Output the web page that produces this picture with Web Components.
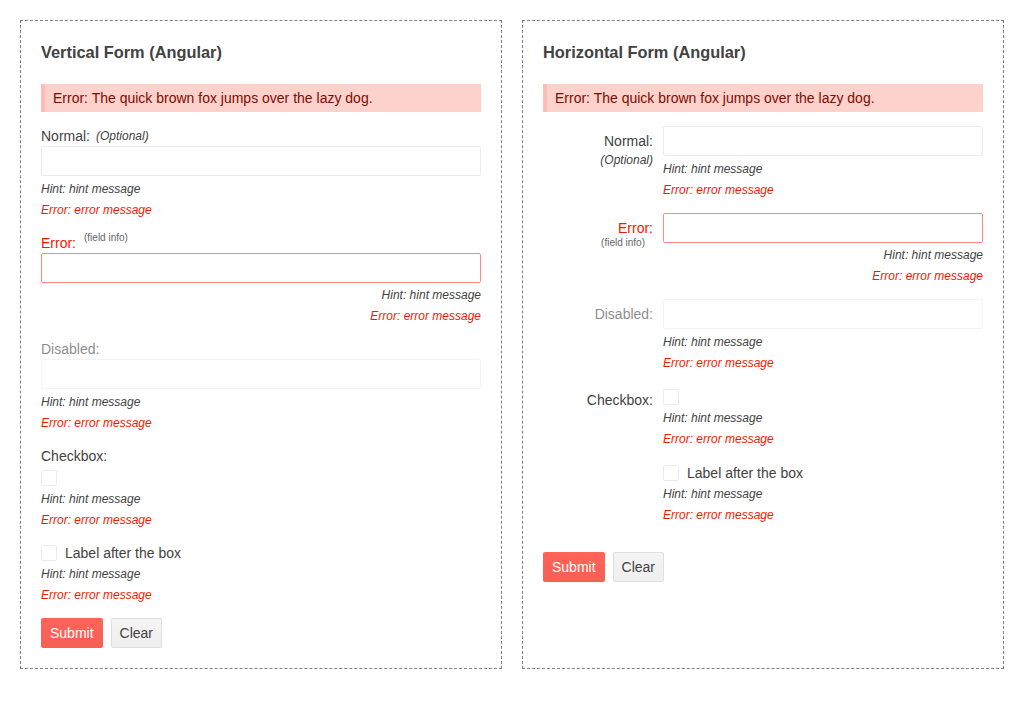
<!DOCTYPE html>
<html lang="en">
<head>
<meta charset="utf-8">
<meta name="viewport" content="width=device-width, initial-scale=1">
<title>Forms</title>
<style>
  body {
    margin: 0;
    padding: 20px;
    background: #fff;
    color: #424242;
    font: 14px/20px "Liberation Sans", Arial, sans-serif;
    --error: #f31700;
  }
</style>
</head>
<body>
<form-columns>
  <form-panel heading="Vertical Form (Angular)">
    <form-alert>Error: The quick brown fox jumps over the lazy dog.</form-alert>
    <form-field label="Normal:" optional="(Optional)"></form-field>
    <form-field label="Error:" info="(field info)" invalid align="end"></form-field>
    <form-field label="Disabled:" disabled></form-field>
    <form-field label="Checkbox:" kind="checkbox"></form-field>
    <form-field after="Label after the box" kind="checkbox"></form-field>
    <form-actions>
      <form-button primary>Submit</form-button>
      <form-button>Clear</form-button>
    </form-actions>
  </form-panel>
  <form-panel heading="Horizontal Form (Angular)">
    <form-alert>Error: The quick brown fox jumps over the lazy dog.</form-alert>
    <form-field horizontal label="Normal:" optional="(Optional)"></form-field>
    <form-field horizontal label="Error:" info="(field info)" invalid align="end"></form-field>
    <form-field horizontal label="Disabled:" disabled></form-field>
    <form-field horizontal label="Checkbox:" kind="checkbox"></form-field>
    <form-field horizontal after="Label after the box" kind="checkbox"></form-field>
    <form-actions spaced>
      <form-button primary>Submit</form-button>
      <form-button>Clear</form-button>
    </form-actions>
  </form-panel>
</form-columns>
<script>
  class BaseElement extends HTMLElement {
    connectedCallback() {
      if (this.shadowRoot) return;
      this.attachShadow({ mode: 'open' }).innerHTML = this.render();
    }
  }

  customElements.define('form-columns', class extends BaseElement {
    render() {
      return `<style>
        :host { display: grid; grid-template-columns: 1fr 1fr; gap: 20px; }
      </style><slot></slot>`;
    }
  });

  customElements.define('form-panel', class extends BaseElement {
    render() {
      return `<style>
        :host { display: block; border: 1px dashed #808080; padding: 20px; min-width: 0; }
        h3 { margin: 0 0 21px; line-height: 22px; }
        form { display: flex; flex-direction: column; gap: 14px; }
      </style>
      <h3>${this.getAttribute('heading')}</h3>
      <form novalidate onsubmit="return false"><slot></slot></form>`;
    }
  });

  customElements.define('form-alert', class extends BaseElement {
    render() {
      return `<style>
        :host { display: block; padding: 4px 8px; border-left: 4px solid #ffbcb7;
          background: #fdd1cc; color: #7f0c00; }
      </style><div role="alert"><slot></slot></div>`;
    }
  });

  customElements.define('form-field', class extends BaseElement {
    render() {
      const attr = name => this.getAttribute(name) || '';
      const state = (this.hasAttribute('disabled') ? ' disabled' : '')
        + (this.hasAttribute('invalid') ? ' aria-invalid="true"' : '');
      const box = attr('kind') === 'checkbox';
      const optional = attr('optional') ? `<span class="optional">${attr('optional')}</span>` : '';
      const info = attr('info') ? `<span class="info">${attr('info')}</span>` : '';
      const label = attr('label')
        ? `<label class="label" for="control"><span>${attr('label')}</span>${optional}${info}</label>` : '';
      const after = attr('after') ? `<label for="control">${attr('after')}</label>` : '';
      return `<style>
        :host { display: block; }
        .label { display: flex; align-items: center; height: 20px; }
        .optional { margin-left: 6px; font-size: 12px; line-height: 18px; font-style: italic; }
        .info { align-self: flex-start; padding: 0 8px; font-size: 10px; line-height: 10px; color: #656565; }
        :host([invalid]) .label > :first-child { color: var(--error); }
        :host([disabled]) .label, :host([disabled]) input { opacity: .6; }
        input { appearance: none; display: block; box-sizing: border-box; margin: 0;
          border: 1px solid #ebebeb; border-radius: 2px; background: #fff;
          color: inherit; font: inherit; }
        input[type=text] { width: 100%; height: 30px; padding: 4px 8px; }
        input[type=checkbox] { width: 16px; height: 16px; }
        input[type=checkbox]:checked { background: #ff6358; }
        :host([invalid]) input { border-color: #f98b80; }
        .row { display: flex; align-items: center; gap: 8px; height: 20px; }
        .label + .content > .row { margin-top: 2px; }
        .message { font-size: 12px; line-height: 18px; font-style: italic; margin-top: 4px; }
        :host([invalid]) .message { margin-top: 3px; }
        .row + .message { margin-top: 2px; }
        .message.error { margin-top: 3px; color: var(--error); }
        :host([align=end]) .message { text-align: right; }

        :host([horizontal]) { display: grid; grid-template-columns: 25% 1fr; column-gap: 10px; }
        :host([horizontal]) .content { grid-column: 2; min-width: 0; }
        :host([horizontal]) .label { flex-direction: column; align-items: flex-end; height: auto; padding-top: 5px; }
        :host([horizontal][kind=checkbox]) .label { padding-top: 4px; }
        :host([horizontal]) .info { align-self: flex-end; }
        :host([horizontal]) .row { margin-top: 1px; }
      </style>
      ${label}
      <div class="content">
        ${box
          ? `<div class="row"><input id="control" type="checkbox"${state}>${after}</div>`
          : `<input id="control" type="text"${state}>`}
        <div class="message">Hint: hint message</div>
        <div class="message error">Error: error message</div>
      </div>`;
    }
  });

  customElements.define('form-actions', class extends BaseElement {
    render() {
      return `<style>
        :host { display: flex; gap: 8px; }
        :host([spaced]) { margin-top: 14px; }
      </style><slot></slot>`;
    }
  });

  customElements.define('form-button', class extends BaseElement {
    render() {
      return `<style>
        :host { display: block; }
        button { display: block; margin: 0; padding: 4px 8px; border: 1px solid #dfdfdf; border-radius: 2px;
          background: #f5f5f5 linear-gradient(#f5f5f5, #eeeeee) border-box; color: inherit; font: inherit; cursor: pointer; }
        :host([primary]) button { border-color: transparent; color: #fff;
          background: #ff6358 linear-gradient(#ff6358, #f66055) border-box; }
      </style><button type="button"><slot></slot></button>`;
    }
  });
</script>
</body>
</html>
